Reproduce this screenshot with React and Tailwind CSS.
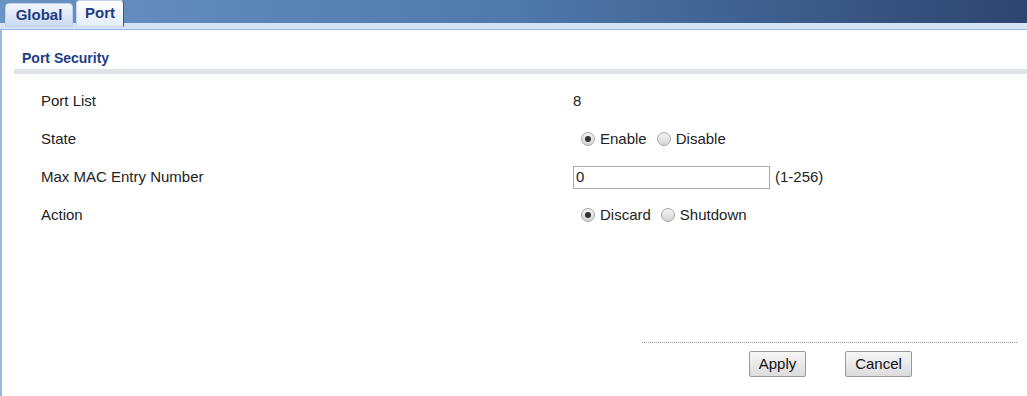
import React from 'react';

const Radio = ({ checked, label }) => (
  <label className="flex items-center gap-[5px]">
    <span className="w-[14px] h-[14px] rounded-full border border-[#a8a8a8] bg-gradient-to-b from-[#f4f4f4] to-[#d4d4d4] flex items-center justify-center">
      {checked && <span className="w-[6px] h-[6px] rounded-full bg-[#333]" />}
    </span>
    <span>{label}</span>
  </label>
);

const Row = ({ label, children }) => (
  <div className="flex items-center h-[38px]">
    <div className="w-[571px] pl-[39px]">{label}</div>
    <div className="flex items-center gap-[5px]">{children}</div>
  </div>
);

export default function App() {
  return (
    <div className="w-[1027px] h-[396px] bg-white overflow-hidden text-[15px] text-[#222]" style={{ fontFamily: '"Liberation Sans", Arial, sans-serif' }}>
      {/* Tab header */}
      <div className="relative h-[30px]">
        <div className="h-[23px] bg-gradient-to-r from-[#6a92c3] via-[#4f79ab] to-[#2e4570]" />
        <div className="h-[6px] bg-[#d5e3f7]" />
        <div className="h-[1px] bg-[#9ab4e0]" />
        <div className="absolute left-[5px] top-0 flex items-end gap-[3px] font-bold text-[15px] text-[#1d3c82]">
          <div className="mt-[2px] h-[24px] w-[68px] rounded-t-[4px] border border-[#bcd0ee] bg-gradient-to-b from-[#f2f6fc] to-[#c9daf2] flex items-center justify-center">
            Global
          </div>
          <div className="h-[27px] w-[48px] rounded-t-[4px] border border-[#c5d6ee] border-r-[#555] border-r-dotted bg-gradient-to-b from-[#ffffff] to-[#e4edf9] flex items-center justify-center">
            Port
          </div>
        </div>
      </div>

      {/* Body */}
      <div className="h-[366px] border-l-2 border-[#9ab4e6] pt-[20px]">
        <div className="pl-[20px] font-bold text-[14px] text-[#1e3c88] leading-[16px]">Port Security</div>
        <div className="ml-[12px] mt-[3px] h-[5px] bg-[#dfe3ea]" />

        <div className="mt-[8px]">
          <Row label="Port List">
            <span>8</span>
          </Row>
          <Row label="State">
            <div className="flex items-center gap-[10px] pl-[8px]">
              <Radio checked label="Enable" />
              <Radio label="Disable" />
            </div>
          </Row>
          <Row label="Max MAC Entry Number">
            <div className="w-[197px] h-[23px] border border-[#a9a9a9] px-[2px] flex items-center">0</div>
            <span>(1-256)</span>
          </Row>
          <Row label="Action">
            <div className="flex items-center gap-[10px] pl-[8px]">
              <Radio checked label="Discard" />
              <Radio label="Shutdown" />
            </div>
          </Row>
        </div>

        <div className="ml-[640px] mr-[10px] mt-[108px] border-t border-dotted border-[#999]" />
        <div className="flex ml-[747px] mt-[8px] gap-[39px]">
          <button className="w-[57px] h-[26px] border border-[#999] rounded-[2px] bg-gradient-to-b from-[#f6f6f6] to-[#dcdcdc] text-[15px] text-[#111]">Apply</button>
          <button className="w-[67px] h-[26px] border border-[#999] rounded-[2px] bg-gradient-to-b from-[#f6f6f6] to-[#dcdcdc] text-[15px] text-[#111]">Cancel</button>
        </div>
      </div>
    </div>
  );
}
